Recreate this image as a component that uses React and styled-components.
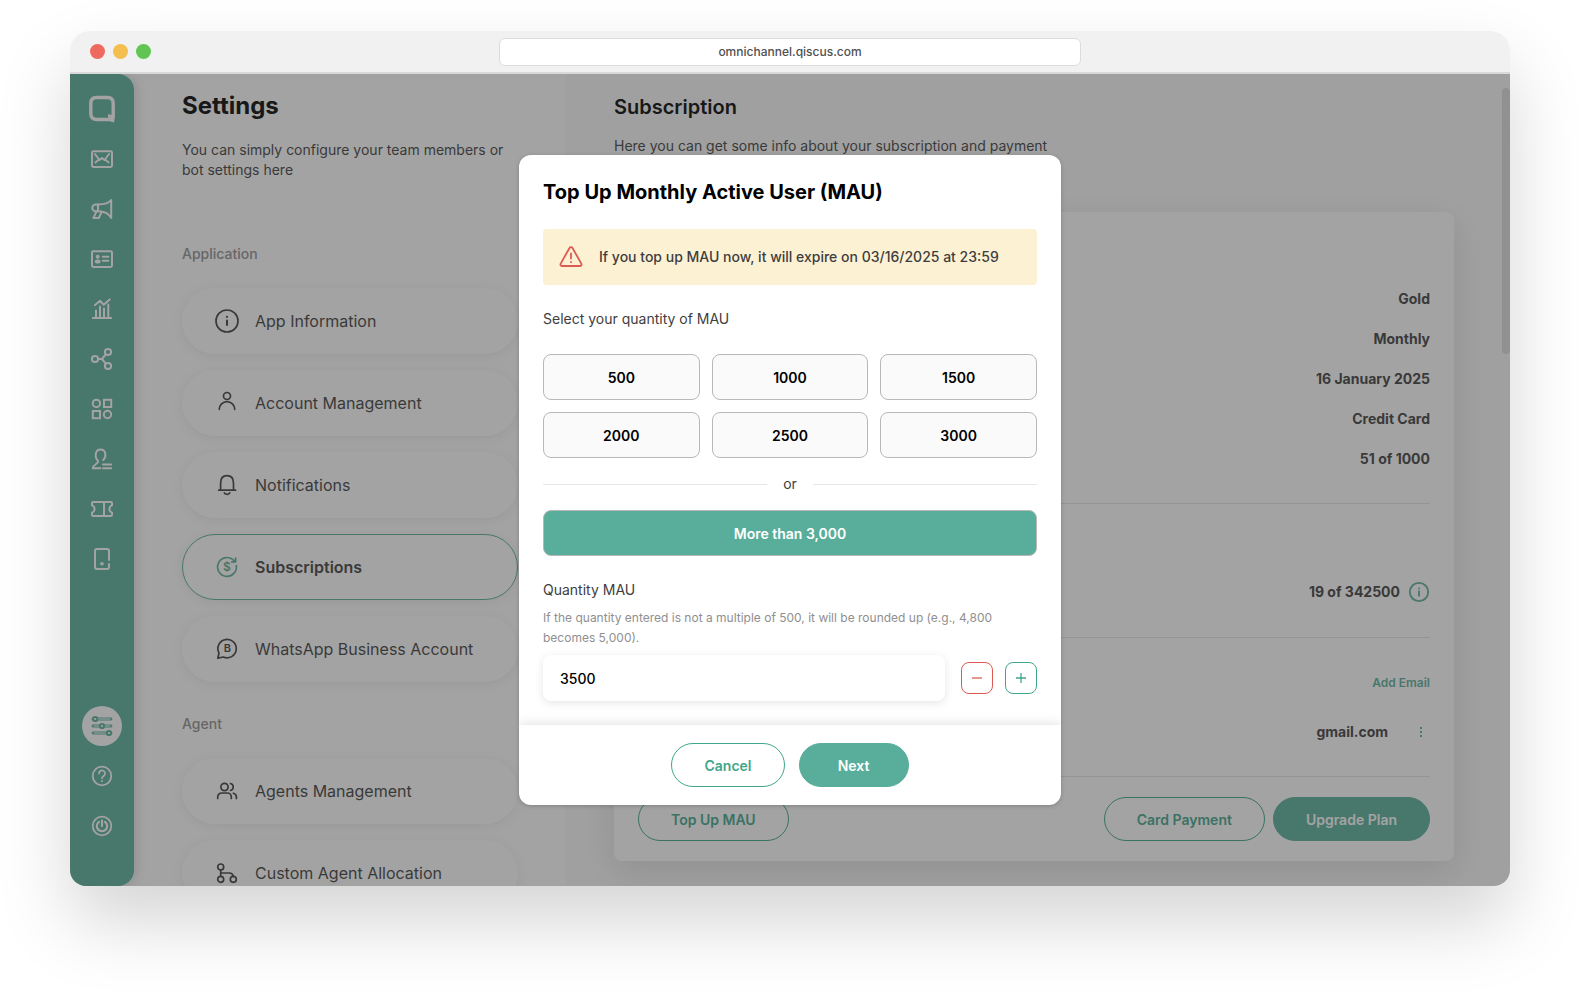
import React, { useState } from "react";
import styled, { createGlobalStyle, css } from "styled-components";

const quantities = ["500", "1000", "1500", "2000", "2500", "3000"];

const planRows = [
  "Gold",
  "Monthly",
  "16 January 2025",
  "Credit Card",
  "51 of 1000",
];

const Icon = ({ size = 24, weight = 1.5, children }) => (
  <svg
    width={size}
    height={size}
    viewBox="0 0 24 24"
    fill="none"
    stroke="currentColor"
    strokeWidth={weight}
    strokeLinecap="round"
    strokeLinejoin="round"
    aria-hidden="true"
  >
    {children}
  </svg>
);

const navIcons = [
  {
    name: "Inbox",
    icon: (
      <>
        <rect x="2" y="4.2" width="20" height="15.8" rx="1.4" />
        <path d="M4.8 7l4.8 6 2.4-2 2.4 2 4.8-6M5.4 15.4l3.4-2.8M15.2 12.6l3.4 2.8" />
      </>
    ),
  },
  {
    name: "Broadcast",
    icon: (
      <>
        <path d="M21.2 3v18C18.5 16.4 15 14.3 8.5 14.3H5.7a3.4 3.4 0 0 1 0-6.8h2.8C15 7.5 18.500 6.5 21.2 3z" />
        <path d="M8 7.5v6.8M6.4 14.6l-3 6.4h5.4l2.8-6" />
      </>
    ),
  },
  {
    name: "Contacts",
    icon: (
      <>
        <rect x="2" y="4.2" width="20" height="15.8" rx="1.4" />
        <circle cx="7.7" cy="9.7" r="2" fill="currentColor" stroke="none" />
        <ellipse
          cx="7.7"
          cy="14.4"
          rx="2.9"
          ry="2"
          fill="currentColor"
          stroke="none"
        />
        <path d="M12.8 9.8h5.6M12.8 13.8h5.6" />
      </>
    ),
  },
  {
    name: "Analytics",
    icon: (
      <path d="M2.8 21h18.4M6 20.5v-7M10 20.5v-11M14 20.5v-9M18.3 20.5v-13M4.8 8.2L10 3.7l3.7 4 6-5.3" />
    ),
  },
  {
    name: "Integration",
    icon: (
      <>
        <circle cx="5" cy="12" r="3.1" />
        <circle cx="18" cy="5" r="3.1" />
        <circle cx="18" cy="19" r="3.1" />
        <path d="M8.2 12H12l3.8-4.6M12 12l3.8 4.6" />
      </>
    ),
  },
  {
    name: "App Center",
    icon: (
      <g strokeLinejoin="miter">
        <circle cx="6.4" cy="6.4" r="3.7" />
        <rect x="14" y="2.8" width="7.2" height="7.2" />
        <rect x="2.8" y="14" width="7.2" height="7.2" />
        <circle cx="17.5" cy="17.5" r="3.7" />
      </g>
    ),
  },
  {
    name: "Agents",
    icon: (
      <path d="M10.4 21.2H2.8c0-4 5.800-3.900 5.400-7.200C4.4 10.600 4.8 2.600 10.500 2.600s6.1 7.600 2.7 10.500M13 17.400h8.200M13 21.200h8.200" />
    ),
  },
  {
    name: "Tickets",
    icon: (
      <path d="M14 5v14M3.200 5h17.600A1.200 1.200 0 0 1 22 6.200v2.200a3.800 3.800 0 0 0 0 7.200v2.200a1.200 1.200 0 0 1-1.200 1.200H3.200A1.200 1.200 0 0 1 2 17.800v-2.200a3.800 3.800 0 0 0 0-7.200V6.200A1.200 1.200 0 0 1 3.200 5z" />
    ),
  },
  {
    name: "Device",
    icon: (
      <>
        <path d="M19 13V4a2 2 0 0 0-2-2H7a2 2 0 0 0-2 2v16a2 2 0 0 0 2 2h10a2 2 0 0 0 2-2v-3" />
        <circle cx="12" cy="16.700" r="1.800" fill="currentColor" stroke="none" />
      </>
    ),
  },
];

const applicationMenu = [
  {
    label: "App Information",
    icon: (
      <>
        <circle cx="12" cy="12" r="11" />
        <path d="M12 11.5v4.500M12 7.800v.2" strokeWidth="2" />
      </>
    ),
  },
  {
    label: "Account Management",
    icon: (
      <>
        <circle cx="12" cy="5" r="3.500" />
        <path d="M4.300 18.300a7.700 7.700 0 0 1 15.400 0" />
      </>
    ),
  },
  {
    label: "Notifications",
    icon: (
      <path d="M3.800 17.200h16.800M5.600 17v-6.800C5.600 5.600 8 2.700 12 2.700s6.500 2.900 6.500 7.500V17M9.300 19.800c.6 2 4.900 2 5.500 0" />
    ),
  },
  {
    label: "Subscriptions",
    active: true,
    icon: (
      <>
        <path d="M21.300 10.500A9.400 9.400 0 1 1 17.600 4.400l2.800 2.200M20.600 3v3.800h-3.900" />
        <text
          x="12"
          y="16"
          fontSize="12"
          fontWeight="600"
          textAnchor="middle"
          fill="currentColor"
          stroke="none"
        >
          $
        </text>
      </>
    ),
  },
  {
    label: "WhatsApp Business Account",
    icon: (
      <>
        <path d="M2.800 21.200l1.200-5.200a9.200 9.200 0 1 1 4.300 4z" />
        <text
          x="12.500"
          y="15.400"
          fontSize="11"
          fontWeight="600"
          textAnchor="middle"
          fill="currentColor"
          stroke="none"
        >
          B
        </text>
      </>
    ),
  },
];

const agentMenu = [
  {
    label: "Agents Management",
    icon: (
      <>
        <circle cx="9.500" cy="8" r="3.600" />
        <path d="M2.700 19.500V18a4 4 0 0 1 4-4h5.600a4 4 0 0 1 4 4v1.500M15.500 4.500a3.600 3.600 0 0 1 0 7M21.400 19.500V18a4 4 0 0 0-3-3.800" />
      </>
    ),
  },
  {
    label: "Custom Agent Allocation",
    icon: (
      <>
        <circle cx="5.700" cy="6" r="3" />
        <circle cx="5.700" cy="18.300" r="3" />
        <circle cx="18.300" cy="18.300" r="3" />
        <path d="M5.700 9v6.300M5.700 12h8.600a4 4 0 0 1 4 3.300" />
      </>
    ),
  },
];

const MenuList = ({ items }) => (
  <Menu>
    {items.map((item) => (
      <li key={item.label}>
        <MenuItem href="#" $active={item.active}>
          <MenuIcon $active={item.active}>
            <Icon weight={1.7}>{item.icon}</Icon>
          </MenuIcon>
          {item.label}
        </MenuItem>
      </li>
    ))}
  </Menu>
);

const Sidebar = () => (
  <SideNav>
    <NavLink href="#" aria-label="Home">
      <svg width="28" height="28" viewBox="0 0 28 28" aria-hidden="true">
        <path
          d="M8.500 2.500h11c4 0 5.700 2 5.700 5.800v10.600c0 1.200.1 2-.4 3.200M21 24.500H8.800c-4 0-6-2-6-6V8.300c0-3.800 1.700-5.800 5.700-5.800"
          fill="none"
          stroke="currentColor"
          strokeWidth="3.400"
        />
        <path d="M20 19l6.900 2-.8 6.500-5.600-1.400z" fill="currentColor" />
      </svg>
    </NavLink>
    {navIcons.map((item) => (
      <NavLink href="#" key={item.name} aria-label={item.name}>
        <Icon weight={2}>{item.icon}</Icon>
      </NavLink>
    ))}
    <NavBottom>
      <NavLink href="#" $selected aria-label="Settings">
        <Icon>
          <path d="M3.500 5h17M3.500 12h17M3.500 19h17" strokeWidth="4" opacity="0.5" />
          <path
            d="M2.800 5h.1M21.100 5h.1M2.800 12h.1M21.100 12h.1M2.800 19h.1M21.100 19h.1"
            strokeWidth="2"
          />
          <g fill="#fff" strokeWidth="2">
            <circle cx="5.200" cy="5" r="2.100" />
            <circle cx="12" cy="12" r="2.100" />
            <circle cx="19" cy="19" r="2.100" />
          </g>
        </Icon>
      </NavLink>
      <NavLink href="#" aria-label="Help">
        <Icon weight={1.8}>
          <circle cx="12" cy="12" r="9.300" />
          <path d="M9 9.500a3 3 0 1 1 4.600 2.500c-1 .7-1.600 1.100-1.600 2.300M12 17v.3" />
        </Icon>
      </NavLink>
      <NavLink href="#" aria-label="Log out">
        <Icon weight={1.8}>
          <circle cx="12" cy="12" r="9.300" />
          <path d="M12 6.500V12M9 7.800a5.200 5.200 0 1 0 6 0" strokeWidth="2.100" />
        </Icon>
      </NavLink>
    </NavBottom>
  </SideNav>
);

const TopUpModal = () => {
  const [amount, setAmount] = useState(3500);

  return (
    <Modal role="dialog" aria-modal="true" aria-labelledby="topup-title">
      <ModalBody>
        <ModalTitle id="topup-title">Top Up Monthly Active User (MAU)</ModalTitle>
        <Alert>
          <Icon weight={1.8}>
            <path d="M10.500 3L1.700 18.600a1.600 1.600 0 0 0 1.400 2.400h17.800a1.600 1.600 0 0 0 1.400-2.400L13.500 3a1.700 1.700 0 0 0-3 0z" />
            <path d="M12 8.500v5M12 17v.2" />
          </Icon>
          If you top up MAU now, it will expire on 03/16/2025 at 23:59
        </Alert>
        <FieldTitle>Select your quantity of MAU</FieldTitle>
        <QuantityGrid>
          {quantities.map((q) => (
            <QuantityButton key={q} type="button">
              {q}
            </QuantityButton>
          ))}
        </QuantityGrid>
        <OrDivider>or</OrDivider>
        <QuantityButton type="button" $selected>
          More than 3,000
        </QuantityButton>
        <QuantityLabel htmlFor="mau">Quantity MAU</QuantityLabel>
        <HelpText>
          If the quantity entered is not a multiple of 500, it will be rounded
          up (e.g., 4,800 becomes 5,000).
        </HelpText>
        <InputRow>
          <AmountInput
            id="mau"
            value={amount}
            onChange={(e) => setAmount(Number(e.target.value) || 0)}
          />
          <StepButton
            type="button"
            $danger
            aria-label="Decrease"
            onClick={() => setAmount(Math.max(0, amount - 500))}
          >
            <svg width="12" height="12" viewBox="0 0 12 12" aria-hidden="true">
              <path d="M1 6h10" stroke="currentColor" strokeWidth="1.300" />
            </svg>
          </StepButton>
          <StepButton
            type="button"
            aria-label="Increase"
            onClick={() => setAmount(amount + 500)}
          >
            <svg width="12" height="12" viewBox="0 0 12 12" aria-hidden="true">
              <path d="M1 6h10M6 1v10" stroke="currentColor" strokeWidth="1.300" />
            </svg>
          </StepButton>
        </InputRow>
      </ModalBody>
      <ModalFooter>
        <PillButton type="button">Cancel</PillButton>
        <PillButton type="button" $primary>
          Next
        </PillButton>
      </ModalFooter>
    </Modal>
  );
};

const App = () => {
  return (
    <>
      <GlobalStyle />
      <Page>
        <BrowserWindow>
          <TitleBar>
            <Lights>
              <Light $color="#ee6a5f" />
              <Light $color="#f5bf4f" />
              <Light $color="#61c554" />
            </Lights>
            <Address>omnichannel.qiscus.com</Address>
            <Lights />
          </TitleBar>
          <Content>
            <Sidebar />
            <SettingsPanel>
              <SettingsTitle>Settings</SettingsTitle>
              <p>
                You can simply configure your team members or bot settings here
              </p>
              <GroupLabel $first>Application</GroupLabel>
              <MenuList items={applicationMenu} />
              <GroupLabel>Agent</GroupLabel>
              <MenuList items={agentMenu} />
            </SettingsPanel>
            <Main>
              <MainInner>
                <MainTitle>Subscription</MainTitle>
                <MainText>
                  Here you can get some info about your subscription and payment
                </MainText>
                <Card>
                  <PlanList>
                    {planRows.map((row) => (
                      <li key={row}>{row}</li>
                    ))}
                  </PlanList>
                  <UsageRow>
                    19 of 342500
                    <InfoButton type="button" aria-label="Usage info">
                      <Icon size={22} weight={2}>
                        <circle cx="12" cy="12" r="10" />
                        <path d="M12 11v5M12 8v.2" />
                      </Icon>
                    </InfoButton>
                  </UsageRow>
                  <EmailSection>
                    <AddEmail href="#">Add Email</AddEmail>
                    <EmailRow>
                      gmail.com
                      <DotsButton type="button" aria-label="Email options">
                        <svg width="4" height="12" viewBox="0 0 4 12" aria-hidden="true">
                          <g fill="currentColor">
                            <rect x="1" y="1" width="2" height="2" />
                            <rect x="1" y="5" width="2" height="2" />
                            <rect x="1" y="9" width="2" height="2" />
                          </g>
                        </svg>
                      </DotsButton>
                    </EmailRow>
                  </EmailSection>
                  <CardActions>
                    <PillButton type="button">Top Up MAU</PillButton>
                    <ActionGroup>
                      <PillButton type="button">Card Payment</PillButton>
                      <PillButton type="button" $primary>
                        Upgrade Plan
                      </PillButton>
                    </ActionGroup>
                  </CardActions>
                </Card>
              </MainInner>
              <ScrollTrack>
                <ScrollThumb />
              </ScrollTrack>
            </Main>
            <Overlay>
              <TopUpModal />
            </Overlay>
          </Content>
        </BrowserWindow>
      </Page>
    </>
  );
};

export default App;

const green = "#58ae9a";
const line = "#e3e3e3";

const GlobalStyle = createGlobalStyle`
  * {
    box-sizing: border-box;
  }
  body {
    margin: 0;
    background: #fff;
    color: #3e3e3e;
    font-family: Inter, "Liberation Sans", sans-serif;
    font-size: 14px;
    line-height: 20px;
  }
  h1, h2, p, ul {
    margin: 0;
    padding: 0;
  }
  ul {
    list-style: none;
  }
  a {
    color: inherit;
    text-decoration: none;
  }
  button, input {
    font-family: inherit;
    font-size: 14px;
  }
  button {
    cursor: pointer;
  }
`;

const Page = styled.div`
  display: flex;
  height: 100vh;
  padding: 31px 70px 109px;
  overflow: hidden;
`;

const BrowserWindow = styled.div`
  display: flex;
  flex-direction: column;
  flex: 1;
  min-width: 0;
  border-radius: 20px 20px 16px 16px;
  box-shadow: 0 36px 72px rgba(0, 0, 0, 0.17);
`;

const TitleBar = styled.div`
  display: flex;
  align-items: center;
  justify-content: space-between;
  height: 43px;
  padding: 0 20px;
  background-color: #f1f1f1;
  border-bottom: 2px solid #d9d9d9;
  border-radius: 20px 20px 0 0;
`;

const Lights = styled.div`
  display: flex;
  gap: 8px;
  width: 64px;
`;

const Light = styled.span`
  width: 15px;
  height: 15px;
  border-radius: 50%;
  background-color: ${(props) => props.$color};
`;

const Address = styled.div`
  width: 42%;
  max-width: 582px;
  height: 28px;
  border: 1px solid #dcdcdc;
  border-radius: 6px;
  background-color: #fff;
  color: #505050;
  font-size: 12px;
  font-weight: 500;
  line-height: 26px;
  text-align: center;
`;

const Content = styled.div`
  position: relative;
  display: flex;
  flex: 1;
  min-height: 0;
  overflow: hidden;
  border-radius: 0 0 16px 16px;
  background-color: #fff;
`;

const SideNav = styled.nav`
  display: flex;
  flex-direction: column;
  align-items: center;
  gap: 10px;
  flex-shrink: 0;
  width: 64px;
  padding: 15px 0 40px;
  border-radius: 0 16px 16px 0;
  background-color: ${green};
  box-shadow: 2px 0 12px rgba(0, 0, 0, 0.15);
`;

const NavLink = styled.a`
  display: flex;
  align-items: center;
  justify-content: center;
  flex-shrink: 0;
  width: 40px;
  height: 40px;
  border-radius: 50%;
  background-color: ${(props) => (props.$selected ? "#fff" : "transparent")};
  && {
    color: ${(props) => (props.$selected ? green : "#fff")};
  }
`;

const NavBottom = styled.div`
  display: flex;
  flex-direction: column;
  gap: 10px;
  margin-top: auto;
`;

const SettingsPanel = styled.section`
  flex: 0 0 432px;
  padding: 16px 48px 0;
`;

const SettingsTitle = styled.h1`
  margin-bottom: 18px;
  color: #000;
  font-size: 24px;
  font-weight: 700;
  line-height: 32px;
`;

const GroupLabel = styled.p`
  margin: ${(props) => (props.$first ? "64px" : "32px")} 0 24px;
  color: #909090;
  font-weight: 500;
`;

const Menu = styled.ul`
  display: flex;
  flex-direction: column;
  gap: 16px;
`;

const MenuItem = styled.a`
  display: flex;
  align-items: center;
  gap: 16px;
  height: 66px;
  padding: 0 32px;
  border: 1px solid ${(props) => (props.$active ? green : "transparent")};
  border-radius: 33px;
  box-shadow: 0 2px 12px rgba(0, 0, 0, 0.08);
  font-size: 16px;
  font-weight: ${(props) => (props.$active ? 600 : 400)};
`;

const MenuIcon = styled.span`
  display: flex;
  color: ${(props) => (props.$active ? green : "inherit")};
`;

const Main = styled.main`
  display: flex;
  flex: 1;
  min-width: 0;
  background-color: #fafafa;
`;

const MainInner = styled.div`
  flex: 1;
  padding: 20px 48px 0;
`;

const MainTitle = styled.h2`
  margin-bottom: 16px;
  color: #000;
  font-size: 20px;
  font-weight: 600;
  line-height: 26px;
`;

const MainText = styled.p`
  margin-bottom: 56px;
`;

const Card = styled.section`
  padding: 0 24px 20px;
  border-radius: 8px;
  background-color: #fff;
  box-shadow: 0 10px 36px rgba(0, 0, 0, 0.12);
  font-weight: 700;
`;

const PlanList = styled.ul`
  display: flex;
  flex-direction: column;
  gap: 20px;
  padding: 77px 0 34px;
  border-bottom: 1px solid ${line};
  text-align: right;
`;

const UsageRow = styled.div`
  display: flex;
  align-items: center;
  justify-content: flex-end;
  gap: 8px;
  padding: 77px 0 34px;
  border-bottom: 1px solid ${line};
`;

const InfoButton = styled.button`
  display: flex;
  padding: 0;
  border: 0;
  background: none;
  color: ${green};
`;

const EmailSection = styled.div`
  display: flex;
  flex-direction: column;
  align-items: flex-end;
  gap: 29px;
  padding: 35px 0 34px;
  border-bottom: 1px solid ${line};
`;

const AddEmail = styled.a`
  && {
    color: ${green};
  }
  font-size: 12px;
  font-weight: 600;
`;

const EmailRow = styled.div`
  display: flex;
  align-items: center;
  gap: 24px;
`;

const DotsButton = styled.button`
  display: flex;
  justify-content: center;
  width: 18px;
  padding: 0;
  border: 0;
  background: none;
  color: ${green};
`;

const CardActions = styled.div`
  display: flex;
  justify-content: space-between;
  padding-top: 20px;
`;

const ActionGroup = styled.div`
  display: flex;
  gap: 8px;
`;

const ScrollTrack = styled.div`
  width: 8px;
  padding-top: 14px;
`;

const ScrollThumb = styled.div`
  height: 266px;
  border-radius: 4px;
  background-color: #dedede;
`;

const Overlay = styled.div`
  position: absolute;
  inset: 0;
  display: flex;
  align-items: center;
  justify-content: center;
  background-color: rgba(53, 53, 53, 0.455);
`;

const Modal = styled.div`
  width: 542px;
  max-width: 90%;
  overflow: hidden;
  border-radius: 12px;
  background-color: #fff;
  box-shadow: 0 1px 4px rgba(0, 0, 0, 0.2);
`;

const ModalBody = styled.div`
  display: flex;
  flex-direction: column;
  padding: 24px;
`;

const ModalTitle = styled.h2`
  margin-bottom: 24px;
  color: #000;
  font-size: 20px;
  font-weight: 700;
  line-height: 26px;
`;

const Alert = styled.div`
  display: flex;
  align-items: center;
  gap: 16px;
  min-height: 56px;
  margin-bottom: 24px;
  padding: 8px 16px;
  border-radius: 4px;
  background-color: #fdf1d4;
  font-weight: 500;
  svg {
    flex-shrink: 0;
    color: #dc5a52;
  }
`;

const FieldTitle = styled.p`
  margin-bottom: 25px;
`;

const QuantityGrid = styled.div`
  display: grid;
  grid-template-columns: repeat(3, 1fr);
  gap: 12px;
`;

const QuantityButton = styled.button`
  height: 46px;
  border: 1px solid #b8b8b8;
  border-radius: 8px;
  background-color: ${(props) => (props.$selected ? green : "#fafafa")};
  color: ${(props) => (props.$selected ? "#fff" : "#000")};
  font-weight: 600;
`;

const OrDivider = styled.div`
  display: flex;
  align-items: center;
  gap: 16px;
  margin: 16px 0;
  &::before,
  &::after {
    content: "";
    flex: 1;
    height: 1px;
    background-color: #e6e6e6;
  }
`;

const QuantityLabel = styled.label`
  margin: 24px 0 8px;
`;

const HelpText = styled.p`
  margin-bottom: 7px;
  color: #8f8f8f;
  font-size: 12px;
`;

const InputRow = styled.div`
  display: flex;
  align-items: center;
  gap: 12px;
`;

const AmountInput = styled.input`
  flex: 1;
  min-width: 0;
  height: 46px;
  margin-right: 4px;
  padding: 0 17px;
  border: 0;
  border-radius: 8px;
  background-color: #fff;
  box-shadow: 0 2px 10px rgba(0, 0, 0, 0.1);
  color: #000;
  font-weight: 500;
  outline: none;
`;

const StepButton = styled.button`
  display: flex;
  align-items: center;
  justify-content: center;
  width: 32px;
  height: 32px;
  padding: 0;
  border: 1px solid currentColor;
  border-radius: 8px;
  background-color: #fff;
  color: ${(props) => (props.$danger ? "#dc5a52" : "#3fa68c")};
`;

const ModalFooter = styled.div`
  display: flex;
  align-items: center;
  justify-content: center;
  gap: 14px;
  height: 80px;
  box-shadow: 0 0 12px rgba(0, 0, 0, 0.15);
`;

const PillButton = styled.button`
  min-width: 110px;
  height: 44px;
  padding: 0 32px;
  border: 1px solid #3fa68c;
  border-radius: 22px;
  background-color: transparent;
  color: #3fa68c;
  font-weight: 600;
  white-space: nowrap;
  ${(props) =>
    props.$primary &&
    css`
      border-color: ${green};
      background-color: ${green};
      color: #fff;
    `}
`;
